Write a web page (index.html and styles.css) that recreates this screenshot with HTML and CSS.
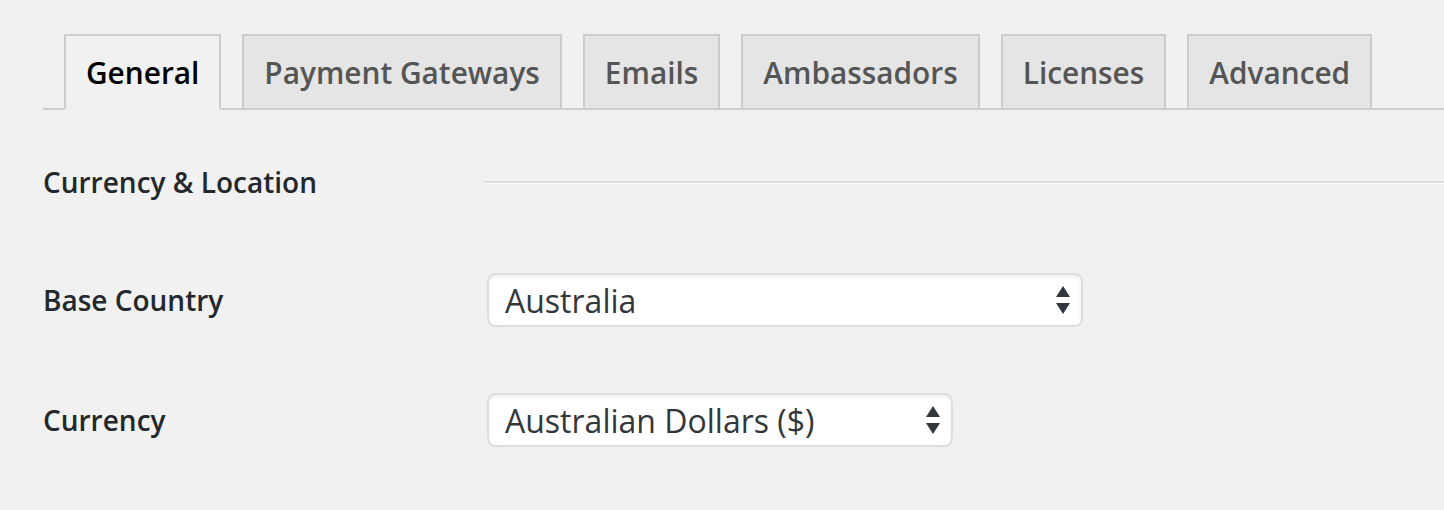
FILE: index.html
```html
<!DOCTYPE html>
<html lang="en">
<head>
<meta charset="utf-8">
<title>Settings</title>
<link rel="stylesheet" href="styles.css">
</head>
<body>
<div class="wrap">
  <nav class="tabs">
    <a class="tab active">General</a>
    <a class="tab">Payment Gateways</a>
    <a class="tab">Emails</a>
    <a class="tab">Ambassadors</a>
    <a class="tab">Licenses</a>
    <a class="tab">Advanced</a>
  </nav>
  <div class="section-head">
    <h2 class="section-title">Currency &amp; Location</h2>
    <div class="rule"></div>
  </div>
  <div class="form">
    <div class="row">
      <label class="label">Base Country</label>
      <div class="select wide">
        <span class="value">Australia</span>
        <svg class="arrows" width="14" height="29" viewBox="0 0 14 29"><path d="M0 11 L7 0 L14 11 Z M0 17 L14 17 L7 28 Z" fill="#32373c"/></svg>
      </div>
    </div>
    <div class="row">
      <label class="label">Currency</label>
      <div class="select narrow">
        <span class="value">Australian Dollars ($)</span>
        <svg class="arrows" width="14" height="29" viewBox="0 0 14 29"><path d="M0 11 L7 0 L14 11 Z M0 17 L14 17 L7 28 Z" fill="#32373c"/></svg>
      </div>
    </div>
  </div>
</div>
</body>
</html>
```
FILE: styles.css
```css
html, body {
  margin: 0;
  background: #f1f1f1;
}
body {
  font-family: "Open Sans", "Noto Sans", "Liberation Sans", sans-serif;
  color: #23282d;
}
.wrap {
  padding: 34px 0 0 43px;
}
.tabs {
  display: flex;
  gap: 21px;
  padding-left: 21px;
  border-bottom: 2px solid #ccc;
}
.tab {
  display: block;
  border: 2px solid #ccc;
  margin-bottom: -2px;
  padding: 2px 20px 0;
  height: 70px;
  line-height: 70px;
  font-size: 29.8px;
  font-weight: 600;
  color: #555;
  background: #e5e5e5;
  text-decoration: none;
}
.tab.active {
  background: #f1f1f1;
  color: #000;
  border-bottom-color: #f1f1f1;
}
.section-head {
  display: flex;
  align-items: center;
  margin-top: 52px;
  height: 40px;
}
.section-title {
  margin: 0;
  width: 441px;
  flex: none;
  font-size: 28px;
  font-weight: 600;
  line-height: 40px;
  color: #23282d;
}
.rule {
  flex: 1;
  border-top: 2px solid #ddd;
  border-bottom: 1px solid #fafafa;
}
.form {
  display: flex;
  flex-direction: column;
  gap: 66px;
  margin-top: 71px;
}
.row {
  display: grid;
  grid-template-columns: 444px auto;
  align-items: center;
  justify-items: start;
}
.label {
  font-size: 28px;
  font-weight: 600;
  color: #23282d;
}
.select {
  box-sizing: border-box;
  height: 54px;
  border: 2px solid #ddd;
  border-radius: 8px;
  background: #fff;
  box-shadow: inset 0 2px 4px rgba(0, 0, 0, 0.07);
  display: flex;
  align-items: center;
  justify-content: space-between;
  padding: 0 11px 0 16px;
}
.select.wide { width: 596px; }
.select.narrow { width: 466px; }
.value {
  font-size: 32px;
  color: #32373c;
}
.arrows {
  display: block;
}
```
